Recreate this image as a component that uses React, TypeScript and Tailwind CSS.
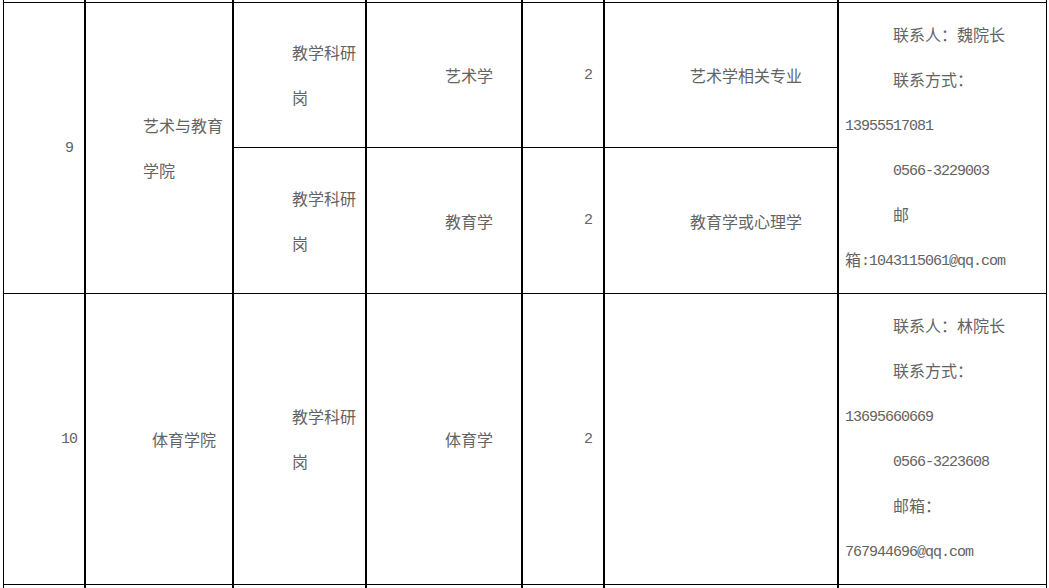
const cjk = "font-['SimSun','Noto_Sans_CJK_SC',sans-serif]";

function A({ children }: { children: React.ReactNode }) {
  return <span className="font-['Liberation_Mono',monospace] text-[15px] tracking-[-1px] leading-none align-[1px]">{children}</span>;
}

function Cell({ className = "", children }: { className?: string; children?: React.ReactNode }) {
  return <div className={`bg-white flex items-center ${className}`}>{children}</div>;
}

function Line({ indent, children }: { indent?: boolean; children: React.ReactNode }) {
  return <div className={`h-[45px] leading-[45px] whitespace-nowrap ${indent ? "pl-[48px]" : ""}`}>{children}</div>;
}

function Contact({ name, mobile, phone, emailSplit, email }: { name: string; mobile: string; phone: string; emailSplit: boolean; email: string }) {
  return (
    <div className="pl-[6px] -mt-[2px]">
      <Line indent>联系人：{name}</Line>
      <Line indent>联系方式：</Line>
      <Line><A>{mobile}</A></Line>
      <Line indent><A>{phone}</A></Line>
      {emailSplit ? (
        <>
          <Line indent>邮</Line>
          <Line>箱<A>:{email}</A></Line>
        </>
      ) : (
        <>
          <Line indent>邮箱：</Line>
          <Line><A>{email}</A></Line>
        </>
      )}
    </div>
  );
}

export default function App() {
  return (
    <div className={`w-[1049px] h-[588px] bg-white overflow-hidden text-[16px] text-[#636363] ${cjk}`}>
      <div className="ml-[3px] w-[1044px] bg-black px-[1px] grid grid-cols-[80px_146px_131px_154px_80px_232px_207px] grid-rows-[2px_144px_145px_290px_3px] gap-x-[2px] gap-y-[1px]">
        {/* tail of previous row */}
        <Cell /><Cell /><Cell /><Cell /><Cell /><Cell /><Cell />

        {/* row 9 */}
        <Cell className="row-span-2 justify-center pl-[50px]"><A>9</A></Cell>
        <Cell className="row-span-2 pl-[57px]">
          <div className="w-[82px] leading-[45px]">艺术与教育学院</div>
        </Cell>
        <Cell className="pl-[58px]">
          <div className="w-[70px] leading-[45px]">教学科研岗</div>
        </Cell>
        <Cell className="pl-[78px]">艺术学</Cell>
        <Cell className="justify-end pr-[11px]"><A>2</A></Cell>
        <Cell className="pl-[85px]">艺术学相关专业</Cell>
        <Cell className="row-span-2">
          <Contact name="魏院长" mobile="13955517081" phone="0566-3229003" emailSplit email="1043115061@qq.com" />
        </Cell>

        <Cell className="pl-[58px]">
          <div className="w-[70px] leading-[45px]">教学科研岗</div>
        </Cell>
        <Cell className="pl-[78px]">教育学</Cell>
        <Cell className="justify-end pr-[11px]"><A>2</A></Cell>
        <Cell className="pl-[85px]">教育学或心理学</Cell>

        {/* row 10 */}
        <Cell className="justify-center pl-[50px]"><A>10</A></Cell>
        <Cell className="pl-[66px]">体育学院</Cell>
        <Cell className="pl-[58px]">
          <div className="w-[70px] leading-[45px]">教学科研岗</div>
        </Cell>
        <Cell className="pl-[78px]">体育学</Cell>
        <Cell className="justify-end pr-[11px]"><A>2</A></Cell>
        <Cell />
        <Cell>
          <Contact name="林院长" mobile="13695660669" phone="0566-3223608" emailSplit={false} email="767944696@qq.com" />
        </Cell>

        {/* head of next row */}
        <Cell /><Cell /><Cell /><Cell /><Cell /><Cell /><Cell />
      </div>
    </div>
  );
}
